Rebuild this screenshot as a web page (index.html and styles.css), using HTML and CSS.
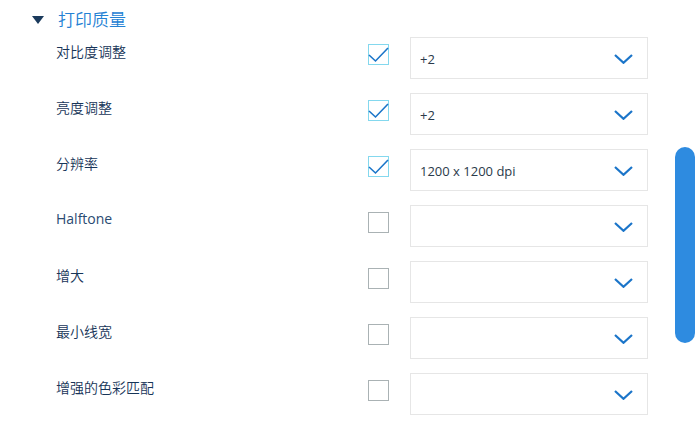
FILE: index.html
```html
<!DOCTYPE html>
<html lang="zh-CN">
<head>
<meta charset="utf-8">
<title>打印质量</title>
<link rel="stylesheet" href="styles.css">
</head>
<body>
<div class="panel">
  <div class="section-head">
    <span class="tri"></span>
    <span class="title">打印质量</span>
  </div>
  <div class="rows">
    <div class="row">
      <div class="label">对比度调整</div>
      <div class="cb checked"><svg viewBox="0 0 21 21" width="21" height="21"><path d="M1 11 L7.5 17 L20 4" fill="none" stroke="#1b75c9" stroke-width="1.6"/></svg></div>
      <div class="select"><span class="value">+2</span><svg class="chev" viewBox="0 0 19 10" width="19" height="10"><path d="M1 1 L9.5 8.8 L18 1" fill="none" stroke="#1b75c9" stroke-width="2.2"/></svg></div>
    </div>
    <div class="row">
      <div class="label">亮度调整</div>
      <div class="cb checked"><svg viewBox="0 0 21 21" width="21" height="21"><path d="M1 11 L7.5 17 L20 4" fill="none" stroke="#1b75c9" stroke-width="1.6"/></svg></div>
      <div class="select"><span class="value">+2</span><svg class="chev" viewBox="0 0 19 10" width="19" height="10"><path d="M1 1 L9.5 8.8 L18 1" fill="none" stroke="#1b75c9" stroke-width="2.2"/></svg></div>
    </div>
    <div class="row">
      <div class="label">分辨率</div>
      <div class="cb checked"><svg viewBox="0 0 21 21" width="21" height="21"><path d="M1 11 L7.5 17 L20 4" fill="none" stroke="#1b75c9" stroke-width="1.6"/></svg></div>
      <div class="select"><span class="value">1200 x 1200 dpi</span><svg class="chev" viewBox="0 0 19 10" width="19" height="10"><path d="M1 1 L9.5 8.8 L18 1" fill="none" stroke="#1b75c9" stroke-width="2.2"/></svg></div>
    </div>
    <div class="row">
      <div class="label latin">Halftone</div>
      <div class="cb"></div>
      <div class="select"><span class="value"></span><svg class="chev" viewBox="0 0 19 10" width="19" height="10"><path d="M1 1 L9.5 8.8 L18 1" fill="none" stroke="#1b75c9" stroke-width="2.2"/></svg></div>
    </div>
    <div class="row">
      <div class="label">增大</div>
      <div class="cb"></div>
      <div class="select"><span class="value"></span><svg class="chev" viewBox="0 0 19 10" width="19" height="10"><path d="M1 1 L9.5 8.8 L18 1" fill="none" stroke="#1b75c9" stroke-width="2.2"/></svg></div>
    </div>
    <div class="row">
      <div class="label">最小线宽</div>
      <div class="cb"></div>
      <div class="select"><span class="value"></span><svg class="chev" viewBox="0 0 19 10" width="19" height="10"><path d="M1 1 L9.5 8.8 L18 1" fill="none" stroke="#1b75c9" stroke-width="2.2"/></svg></div>
    </div>
    <div class="row">
      <div class="label">增强的色彩匹配</div>
      <div class="cb"></div>
      <div class="select"><span class="value"></span><svg class="chev" viewBox="0 0 19 10" width="19" height="10"><path d="M1 1 L9.5 8.8 L18 1" fill="none" stroke="#1b75c9" stroke-width="2.2"/></svg></div>
    </div>
  </div>
  <div class="scroll-thumb"></div>
</div>
</body>
</html>
```
FILE: styles.css
```css
html, body {
  margin: 0;
  padding: 0;
  background: #ffffff;
}
body {
  font-family: "Open Sans", "Noto Sans CJK SC", sans-serif;
  width: 698px;
  height: 426px;
  overflow: hidden;
}
.panel {
  position: relative;
  width: 698px;
  height: 426px;
}
.section-head {
  display: flex;
  align-items: center;
  height: 37px;
  padding-left: 32px;
  box-sizing: border-box;
}
.tri {
  width: 0;
  height: 0;
  border-left: 6px solid transparent;
  border-right: 6px solid transparent;
  border-top: 8px solid #1a3a5c;
  margin-top: 2px;
}
.title {
  margin-left: 14px;
  font-family: "Noto Sans CJK SC", sans-serif;
  font-weight: 350;
  font-size: 17px;
  line-height: 22px;
  color: #2481d4;
}
.rows {
  display: flex;
  flex-direction: column;
}
.row {
  display: flex;
  align-items: flex-start;
  height: 56px;
  padding-left: 56px;
}
.label {
  width: 312px;
  margin-top: 4px;
  font-family: "Noto Sans CJK SC", sans-serif;
  font-weight: 350;
  font-size: 14px;
  line-height: 20px;
  color: #173558;
}
.label.latin {
  font-family: "Open Sans", sans-serif;
  font-weight: 400;
  font-size: 14px;
  margin-top: 4px;
  color: #2a4a72;
}
.cb {
  width: 21px;
  height: 21px;
  margin-top: 7px;
  box-sizing: border-box;
  border: 1px solid #aab2b4;
  position: relative;
  flex: none;
}
.cb.checked {
  border-color: #84d8ee;
}
.cb svg {
  position: absolute;
  left: -1px;
  top: -1px;
}
.select {
  margin-left: 21px;
  width: 238px;
  height: 42px;
  box-sizing: border-box;
  border: 1px solid #e6e6e6;
  display: flex;
  align-items: center;
  justify-content: space-between;
  padding: 0 14px 0 9px;
}
.value {
  font-family: "Open Sans", sans-serif;
  font-size: 13px;
  color: #2a3a4a;
  margin-top: 2px;
}
.chev {
  display: block;
  margin-top: 1px;
}
.scroll-thumb {
  position: absolute;
  left: 675px;
  top: 147px;
  width: 20px;
  height: 196px;
  border-radius: 10px;
  background: #2e8be0;
}
```
